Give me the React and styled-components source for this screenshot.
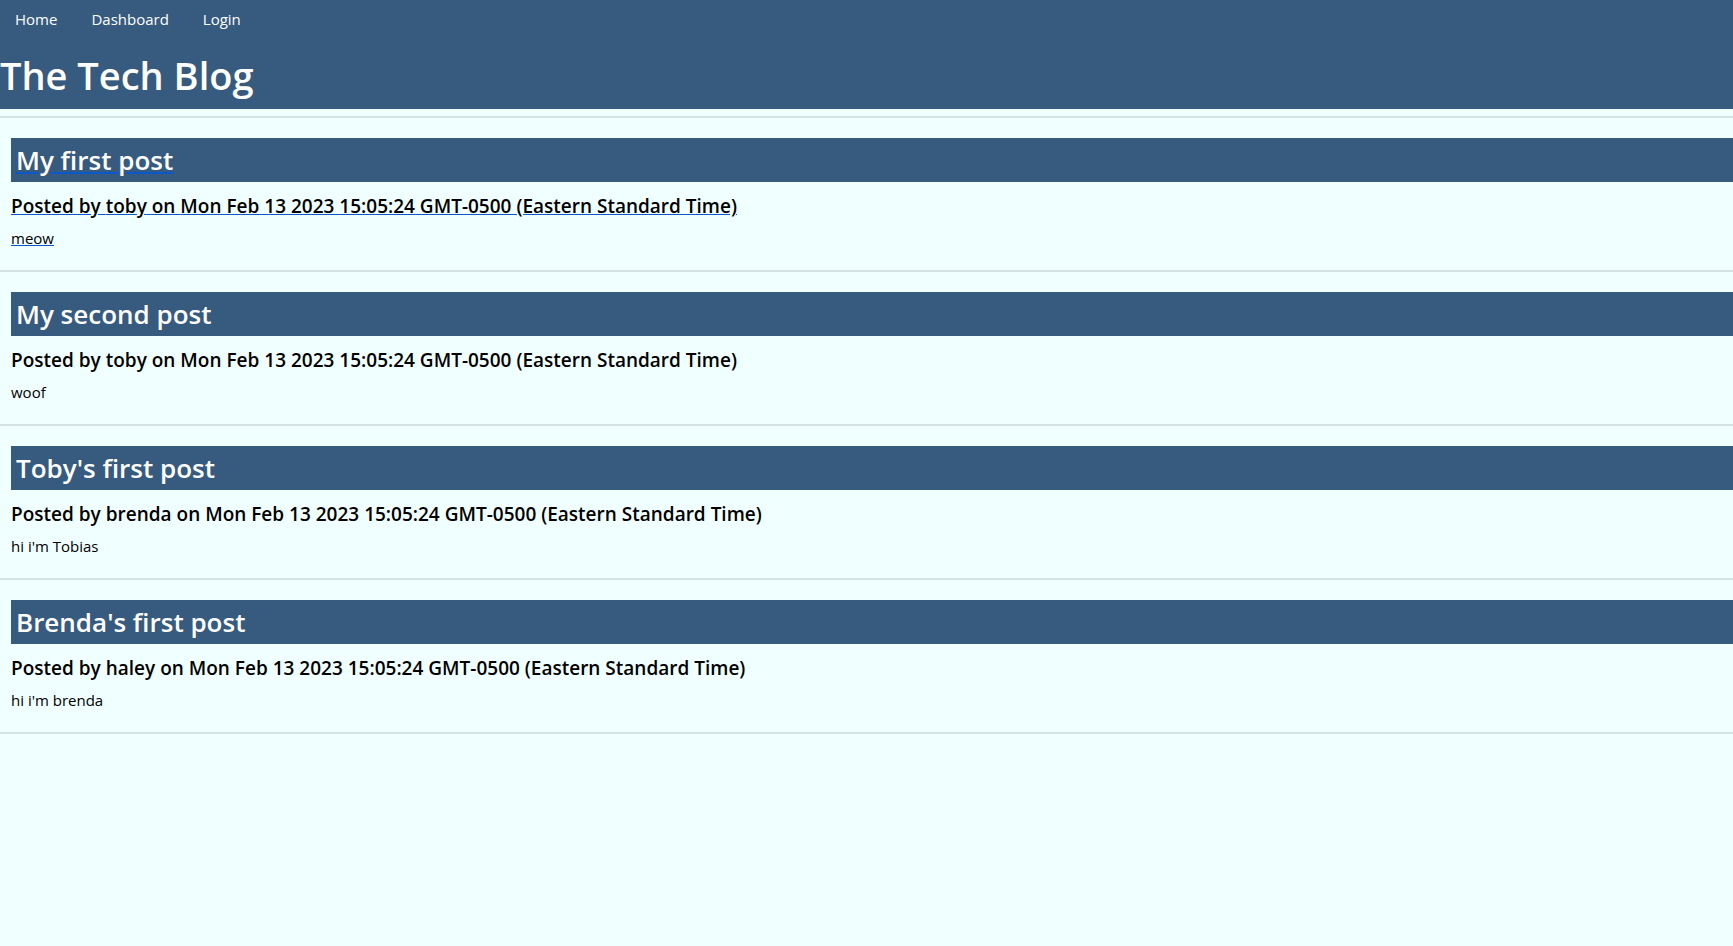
import React from 'react';
import styled, { createGlobalStyle } from 'styled-components';

const GlobalStyle = createGlobalStyle`
  body {
    margin: 0;
    background-color: #f0ffff;
    font-family: "Open Sans", "Noto Sans", sans-serif;
    color: #000;
  }
`;

const Header = styled.header`
  background-color: #375a7f;
  color: #fff;
  height: 109px;
`;

const Nav = styled.nav`
  display: flex;
  height: 40px;
  align-items: center;
`;

const NavLink = styled.a`
  color: #fff;
  text-decoration: none;
  font-size: 15px;
  padding: 0 16px 2px 15px;
  margin-right: 3px;
  cursor: pointer;
`;

const SiteTitle = styled.h1`
  margin: 0;
  font-size: 38px;
  font-weight: 600;
  line-height: 48px;
  padding-top: 11px;
`;

const Divider = styled.div`
  height: 2px;
  margin-top: 7px;
  background-color: #d4e2e2;
`;

const PostList = styled.main`
  display: flex;
  flex-direction: column;
`;

const PostLink = styled.a`
  display: block;
  color: #0a58ca;
  text-decoration: ${p => (p.$hovered ? 'underline' : 'none')};
  border-bottom: 2px solid #d4e2e2;
  padding: 0 0 21px 11px;
  margin-top: 20px;
  cursor: pointer;
`;

const PostTitle = styled.h3`
  margin: 0;
  background-color: #375a7f;
  color: #fff;
  font-size: 26px;
  font-weight: 600;
  line-height: 44px;
  padding-left: 5px;
`;

const PostMeta = styled.p`
  margin: 10px 0 0;
  color: #000;
  font-size: 19px;
  font-weight: 600;
  line-height: 28px;
`;

const PostBody = styled.p`
  margin: 7px 0 0;
  color: #000;
  font-size: 15px;
  line-height: 22px;
`;

const posts = [
  { title: 'My first post', author: 'toby', body: 'meow' },
  { title: 'My second post', author: 'toby', body: 'woof' },
  { title: "Toby's first post", author: 'brenda', body: "hi i'm Tobias" },
  { title: "Brenda's first post", author: 'haley', body: "hi i'm brenda" },
];

const date = 'Mon Feb 13 2023 15:05:24 GMT-0500 (Eastern Standard Time)';

export default function App() {
  return (
    <>
      <GlobalStyle />
      <Header>
        <Nav>
          <NavLink>Home</NavLink>
          <NavLink>Dashboard</NavLink>
          <NavLink>Login</NavLink>
        </Nav>
        <SiteTitle>The Tech Blog</SiteTitle>
      </Header>
      <Divider />
      <PostList>
        {posts.map((post, i) => (
          <PostLink key={post.title} $hovered={i === 0}>
            <PostTitle>{post.title}</PostTitle>
            <PostMeta>Posted by {post.author} on {date}</PostMeta>
            <PostBody>{post.body}</PostBody>
          </PostLink>
        ))}
      </PostList>
    </>
  );
}
